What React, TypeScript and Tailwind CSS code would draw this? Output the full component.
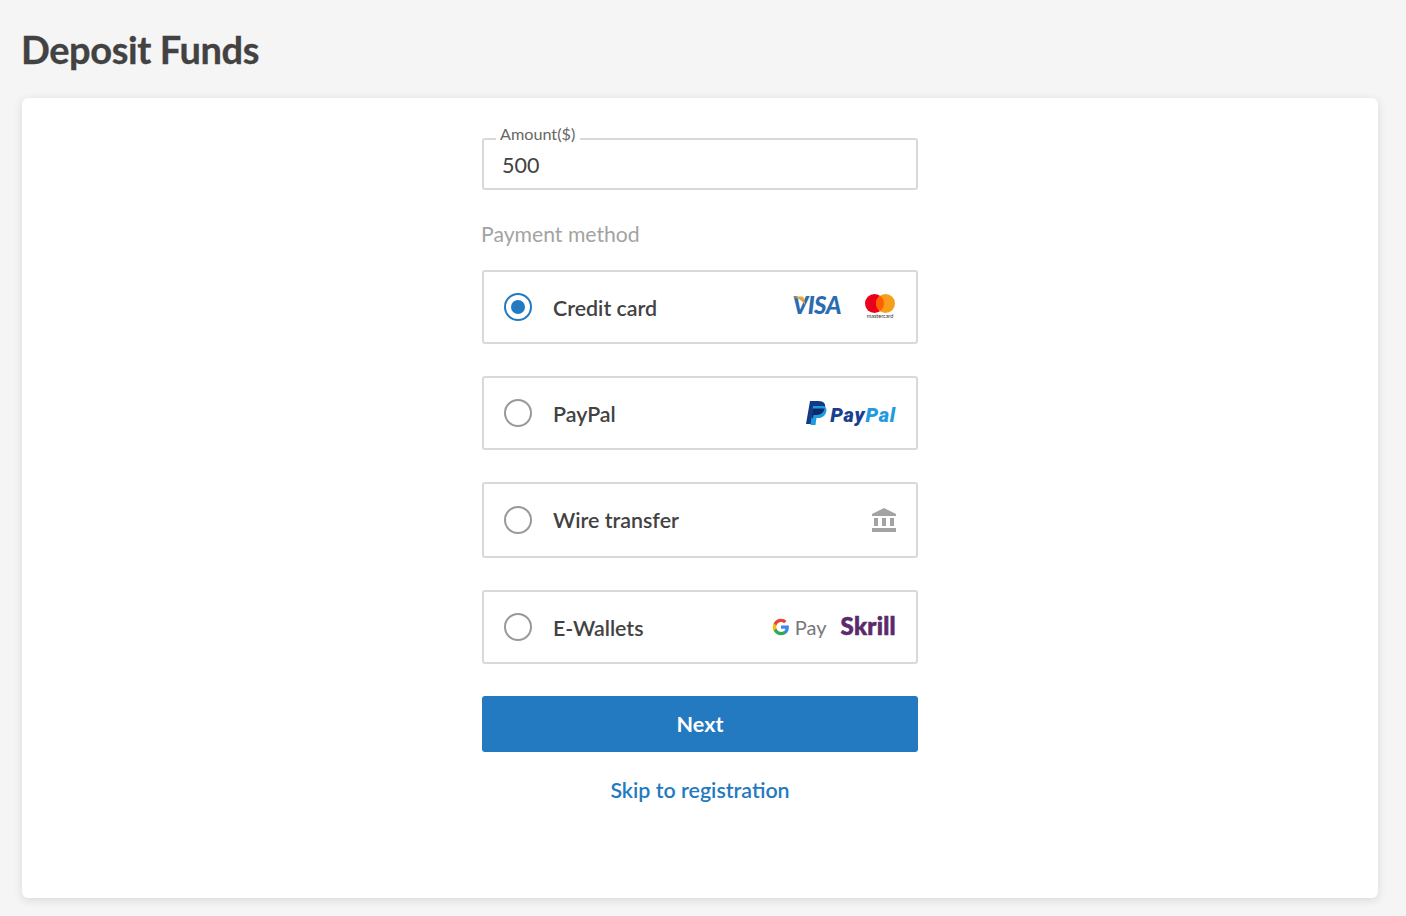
import React from "react";

const font = "font-['Lato','Open_Sans',sans-serif]";

function Row({ label, checked, h, labelClass = "mt-[2px]", children }: { label: string; checked?: boolean; h: string; labelClass?: string; children: React.ReactNode }) {
  return (
    <div className={`flex ${h} items-center rounded-[3px] border-2 border-[#d9d9d9] pl-5 pr-5`}>
      <span className={`flex h-7 w-7 items-center justify-center rounded-full border-2 ${checked ? "border-[#247ac0]" : "border-[#999999]"}`}>
        {checked && <span className="h-3.5 w-3.5 rounded-full bg-[#247ac0]" />}
      </span>
      <span className={`ml-[21px] text-[21.400px] font-semibold leading-7 text-[#424242] ${labelClass}`}>{label}</span>
      <span className="ml-auto flex items-center">{children}</span>
    </div>
  );
}

function Visa() {
  return (
    <span className="relative mb-[5px] mr-[23px] flex h-5 w-[48px] items-center justify-end">
      <span className="relative text-[24px] font-black italic leading-5 tracking-[-0.5px] text-[#2a6cb0]">VISA</span>
      <svg className="absolute left-0 top-[1px]" width="14" height="10" viewBox="0 0 14 10">
        <path d="M0 0.500 L8 0.500 C10 0.500 10.500 1 11 3 L12.500 9.500 C10 5 5 2 0 0.500 Z" fill="#e8a33d" />
      </svg>
    </span>
  );
}

function Mastercard() {
  return (
    <span className="mb-[1px] flex w-8 flex-col items-center">
      <svg width="32" height="19" viewBox="0 0 32 19">
        <circle cx="10.500" cy="9.500" r="9.500" fill="#eb001b" />
        <circle cx="21.500" cy="9.500" r="9.500" fill="#f79e1b" />
        <path d="M16 1.750 A9.500 9.500 0 0 1 16 17.250 A9.500 9.500 0 0 1 16 1.750 Z" fill="#ff5f00" />
      </svg>
      <span className="mt-[1px] h-[5px] text-[5.500px] leading-[5px] text-[#333333]">mastercard</span>
    </span>
  );
}

function PayPal() {
  return (
    <span className="flex items-center">
      <svg width="21" height="24" viewBox="0 0 21 24">
        <path d="M4 0 H12.500 C18 0 20 3 19 7 C18 12 14 14 10 14 H7.500 L6 23 H0 Z" fill="#123a86" />
        <path d="M7 5 H17.500 C20.500 6 21 8.500 20 11.500 C19 15 16 17 12 17 H10.500 L9.500 24 H4.500 L5 20 Z" fill="#1f9bde" />
        <path d="M6.600 7.500 H18.500 C18 12 14 14 10 14 H7.500 L7 17 H5.600 Z" fill="#0d2a6b" />
      </svg>
      <span className="ml-[3px] mt-[3px] font-['Roboto',sans-serif] text-[20px] font-black italic leading-6 tracking-[0.8px]">
        <span className="text-[#1a3f8f]">Pay</span>
        <span className="text-[#1f9bde]">Pal</span>
      </span>
    </span>
  );
}

function Bank() {
  return (
    <svg className="mb-[1px] mr-[-1px]" width="26" height="24" viewBox="0 0 26 24" fill="#a3a3a3">
      <path d="M13 0 L25 6 V8 H1 V6 Z" />
      <rect x="3" y="10" width="4" height="8" />
      <rect x="11" y="10" width="4" height="8" />
      <rect x="19" y="10" width="4" height="8" />
      <rect x="1" y="20" width="24" height="4" />
    </svg>
  );
}

function GPay() {
  return (
    <span className="mr-[14px] flex items-center">
      <svg width="18" height="18" viewBox="0 0 48 48">
        <path fill="#4285f4" d="M45.100 24.500c0-1.600-.1-3.100-.4-4.500H24v8.600h11.800c-.5 2.700-2 5-4.400 6.600v5.500h7.100c4.200-3.800 6.600-9.500 6.600-16.200z" />
        <path fill="#34a853" d="M24 46c5.900 0 10.900-2 14.500-5.300l-7.100-5.500c-2 1.300-4.500 2.100-7.400 2.100-5.700 0-10.500-3.800-12.200-9H4.500v5.700C8.100 41.100 15.500 46 24 46z" />
        <path fill="#fbbc05" d="M11.800 28.300c-.4-1.300-.7-2.800-.7-4.300s.3-3 .7-4.300V14H4.500C3 17 2 20.400 2 24s1 7 2.500 10z" />
        <path fill="#ea4335" d="M24 10.700c3.200 0 6.100 1.100 8.400 3.300l6.300-6.300C34.900 4.200 29.900 2 24 2 15.500 2 8.100 6.900 4.500 14l7.300 5.700c1.700-5.200 6.500-9 12.200-9z" />
      </svg>
      <span className="ml-[5px] text-[20px] leading-6 text-[#77797c]">Pay</span>
    </span>
  );
}

function Skrill() {
  return <span className="mb-[2px] text-[24px] font-black leading-6 tracking-[0.3px] text-[#5b2a6a] [-webkit-text-stroke:0.6px_#5b2a6a]">Skrill</span>;
}

export default function App() {
  return (
    <div className={`min-h-[916px] bg-[#f5f5f5] pl-[22px] pr-[28px] pt-6 ${font}`}>
      <h1 className="-ml-px text-[38px] font-bold leading-[50px] tracking-[-0.42px] text-[#424242] [-webkit-text-stroke:0.3px_#424242]">Deposit Funds</h1>
      <div className="mt-6 flex h-[800px] flex-col items-center rounded-md bg-white pt-10 shadow-[0_2px_10px_rgba(0,0,0,0.12)]">
        <div className="flex w-[436px] flex-col">
          <div className="relative flex h-[52px] items-center rounded-[3px] border-2 border-[#d9d9d9] px-[18px] pt-[3px] text-[21.500px] text-[#424242]">
            500
            <span className="absolute -top-4 left-3 bg-white pl-1 pr-[5px] text-[16.200px] leading-5 text-[#666666]">Amount($)</span>
          </div>
          <div className="-ml-px mt-[30px] text-[21.200px] leading-7 text-[#a3a3a3]">Payment method</div>
          <div className="mt-[22px] flex flex-col gap-8">
            <Row label="Credit card" checked h="h-[74px]">
              <Visa />
              <Mastercard />
            </Row>
            <Row label="PayPal" h="h-[74px]">
              <PayPal />
            </Row>
            <Row label="Wire transfer" h="h-[76px]" labelClass="">
              <Bank />
            </Row>
            <Row label="E-Wallets" h="h-[74px]">
              <GPay />
              <Skrill />
            </Row>
          </div>
          <button className="mt-8 h-14 rounded-[3px] bg-[#247ac0] text-[21.500px] font-bold text-white">Next</button>
          <a className="mt-6 text-center text-[21.400px] font-semibold leading-7 text-[#247ac0]">Skip to registration</a>
        </div>
      </div>
    </div>
  );
}
